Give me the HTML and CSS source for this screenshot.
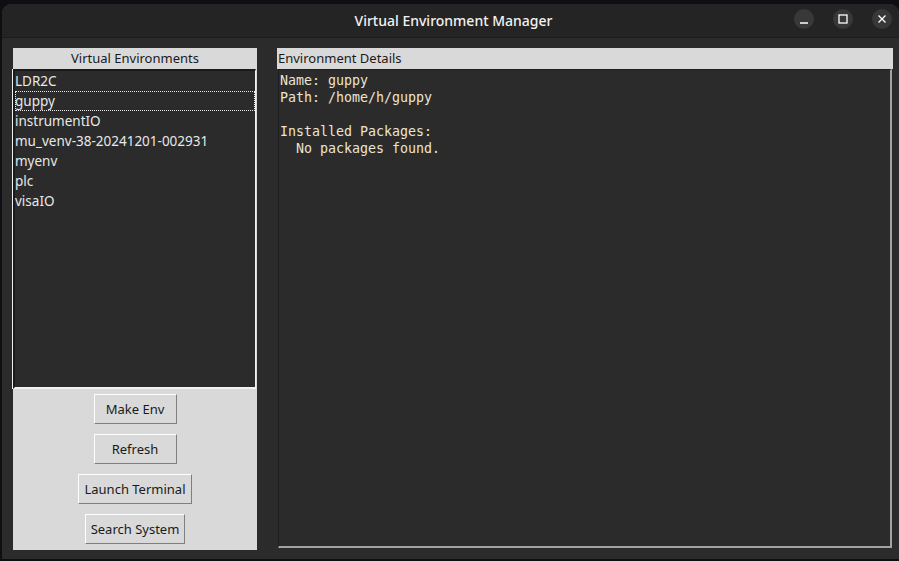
FILE: index.html
```html
<!DOCTYPE html>
<html>
<head>
<meta charset="utf-8">
<title>Virtual Environment Manager</title>
<link rel="stylesheet" href="styles.css">
</head>
<body>
<div class="window">
  <div class="titlebar">
    <div class="title">Virtual Environment Manager</div>
    <div class="controls">
      <span class="ctl"><svg width="12" height="12" viewBox="0 0 12 12"><path d="M2 10h8" stroke="#fff" stroke-width="1.4"/></svg></span>
      <span class="ctl"><svg width="12" height="12" viewBox="0 0 12 12"><rect x="2" y="2" width="8" height="8" fill="none" stroke="#fff" stroke-width="1.3"/></svg></span>
      <span class="ctl"><svg width="12" height="12" viewBox="0 0 12 12"><path d="M2.5 2.5l7 7M9.5 2.5l-7 7" stroke="#fff" stroke-width="1.3"/></svg></span>
    </div>
  </div>
  <div class="content">
    <div class="left">
      <div class="hdr center">Virtual Environments</div>
      <div class="listbox">
        <div class="item">LDR2C</div>
        <div class="item sel">guppy</div>
        <div class="item">instrumentIO</div>
        <div class="item">mu_venv-38-20241201-002931</div>
        <div class="item">myenv</div>
        <div class="item">plc</div>
        <div class="item">visaIO</div>
      </div>
      <div class="buttons">
        <button class="btn w83">Make Env</button>
        <button class="btn w83">Refresh</button>
        <button class="btn">Launch Terminal</button>
        <button class="btn">Search System</button>
      </div>
    </div>
    <div class="right">
      <div class="hdr">Environment Details</div>
      <pre class="details">Name: guppy
Path: /home/h/guppy

Installed Packages:
  No packages found.</pre>
    </div>
  </div>
</div>
</body>
</html>
```
FILE: styles.css
```css
html, body {
  margin: 0;
  padding: 0;
  background: #0e0e13;
  width: 899px;
  height: 561px;
  overflow: hidden;
  font-family: "Noto Sans", sans-serif;
}
.window {
  margin: 4px 0 0 2px;
  height: 555px;
  border-radius: 9px 9px 0 0;
  overflow: hidden;
  background: #2b2b2b;
  display: flex;
  flex-direction: column;
}
.titlebar {
  height: 33px;
  flex: none;
  background: #242424;
  border-bottom: 1px solid #1b1b1b;
  position: relative;
  display: flex;
  align-items: center;
  justify-content: center;
}
.title {
  color: #f2f2f2;
  font-size: 14px;
  font-weight: 500;
  padding-left: 6px;
}
.controls {
  position: absolute;
  right: 7px;
  top: 5px;
  display: flex;
  gap: 19px;
}
.ctl {
  width: 20px;
  height: 20px;
  border-radius: 50%;
  background: #383838;
  display: flex;
  align-items: center;
  justify-content: center;
}
.content {
  flex: 1;
  display: flex;
  gap: 20px;
  padding: 10px 6px 7px 11px;
}
.left {
  width: 244px;
  height: 502px;
  background: #d9d9d9;
  display: flex;
  flex-direction: column;
}
.hdr {
  height: 21px;
  line-height: 21px;
  background: #d9d9d9;
  color: #1a1a1a;
  font-size: 13px;
  padding-left: 1px;
  flex: none;
}
.center { text-align: center; padding-left: 0; }
.listbox {
  height: 316px;
  margin: 0 1px 0 0;
  background: #2b2b2b;
  border-top: 2px solid #1a1a1a;
  border-left: 2px solid #1a1a1a;
  border-right: 1px solid #f0f0f0;
  border-bottom: 2px solid #f0f0f0;
  box-shadow: -1px 0 0 #f0f0f0;
  flex: none;
}
.item {
  height: 20px;
  line-height: 20px;
  color: #e8e8e8;
  font-size: 13.5px;
  padding-left: 0;
  box-sizing: border-box;
}
.sel {
  outline: 1px dotted #e8e8e8;
  outline-offset: -1px;
}
.buttons {
  display: flex;
  flex-direction: column;
  align-items: center;
  gap: 10px;
  padding: 5px 0 0 0;
}
.btn {
  height: 30px;
  padding: 0 5px;
  background: #d9d9d9;
  color: #1a1a1a;
  font-family: "Noto Sans", sans-serif;
  font-size: 13px;
  border-top: 1px solid #ffffff;
  border-left: 1px solid #ffffff;
  border-right: 1px solid #7f7f7f;
  border-bottom: 1px solid #7f7f7f;
  border-radius: 0;
}
.w83 { width: 83px; }
.right {
  width: 616px;
  display: flex;
  flex-direction: column;
}
.details {
  margin: 0 1px 0 1px;
  height: 479px;
  box-sizing: border-box;
  background: #2b2b2b;
  border-top: 1px solid #1e1e1e;
  border-left: 1px solid #1e1e1e;
  border-right: 2px solid #a3a3a3;
  border-bottom: 2px solid #a3a3a3;
  padding: 2px 0 0 1px;
  color: #ebe4d4;
  font-family: "DejaVu Sans Mono", monospace;
  font-size: 13.3px;
  line-height: 17px;
}
```
